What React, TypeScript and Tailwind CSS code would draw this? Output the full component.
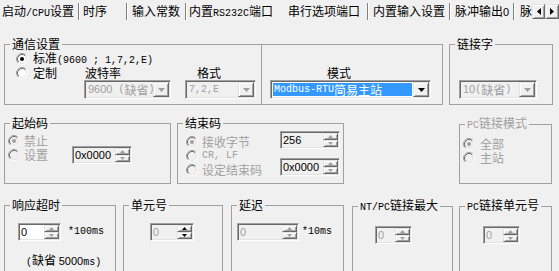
import clsx from 'clsx'
import type { ReactNode } from 'react'

const M = ({ children }: { children: ReactNode }) => (
  <span className="font-['Liberation_Mono',monospace] text-[10px]">{children}</span>
)

const T = ({ children }: { children: ReactNode }) => (
  <span className="font-['Liberation_Sans',sans-serif] text-[11px]">{children}</span>
)

function Radio({ on = false, disabled = false }: { on?: boolean; disabled?: boolean }) {
  return (
    <svg width="12" height="12" viewBox="0 0 12 12" className="shrink-0">
      <circle cx="6" cy="6" r="4" fill={disabled ? '#f0f0f0' : '#fff'} />
      <path d="M2.11 9.89A5.5 5.5 0 0 1 9.89 2.11" fill="none" stroke="#a0a0a0" />
      <path d="M9.89 2.11A5.5 5.5 0 0 1 2.11 9.89" fill="none" stroke="#fff" />
      <path d="M2.82 9.18A4.5 4.5 0 0 1 9.18 2.82" fill="none" stroke="#696969" />
      <path d="M9.18 2.82A4.5 4.5 0 0 1 2.82 9.18" fill="none" stroke="#e3e3e3" />
      {on && <circle cx="6" cy="6" r="2" fill={disabled ? '#a0a0a0' : '#000'} />}
    </svg>
  )
}

function Arrow({ dir, dim }: { dir: 'up' | 'down'; dim?: boolean }) {
  return (
    <svg width="5" height="3" viewBox="0 0 5 3">
      <path d={dir === 'up' ? 'M2.5 0L5 3H0z' : 'M0 0H5L2.5 3z'} fill={dim ? '#a0a0a0' : '#000'} />
    </svg>
  )
}

const raised =
  'border border-t-[#e3e3e3] border-l-[#e3e3e3] border-b-[#696969] border-r-[#696969] bg-[#f0f0f0] shadow-[inset_1px_1px_0_#fff,inset_-1px_-1px_0_#a0a0a0]'
const sunken =
  'border border-t-[#a0a0a0] border-l-[#a0a0a0] border-b-white border-r-white p-[1px] shadow-[inset_1px_1px_0_#696969,inset_-1px_-1px_0_#e3e3e3]'

function Combo({
  className,
  children,
  disabled = false,
  highlight = false,
}: {
  className: string
  children: ReactNode
  disabled?: boolean
  highlight?: boolean
}) {
  return (
    <div className={clsx('flex h-[19px] shrink-0', sunken, disabled ? 'bg-[#f0f0f0]' : 'bg-white', className)}>
      <div
        className={clsx(
          'm-[1px] flex min-w-0 flex-1 items-center whitespace-nowrap pl-[1px] leading-[13px]',
          highlight && 'bg-[#3399ff] text-white',
          disabled && 'text-[#a0a0a0]',
        )}
      >
        {children}
      </div>
      <div className={clsx('flex h-full w-[16px] items-center justify-center', raised)}>
        <svg width="7" height="4" viewBox="0 0 7 4">
          <path d="M0 0H7L3.5 4z" fill={disabled ? '#a0a0a0' : '#000'} />
        </svg>
      </div>
    </div>
  )
}

function Spin({
  className,
  value,
  white = false,
  dimText = false,
  dimArrows = true,
}: {
  className: string
  value: string
  white?: boolean
  dimText?: boolean
  dimArrows?: boolean
}) {
  return (
    <div className={clsx('flex h-[18px] shrink-0', sunken, white ? 'bg-white' : 'bg-[#f0f0f0]', className)}>
      <div
        className={clsx(
          "flex min-w-0 flex-1 items-center pl-[1px] font-['Liberation_Sans',sans-serif] text-[11px]",
          dimText ? 'text-[#a0a0a0]' : 'text-black',
        )}
      >
        {value}
      </div>
      <div className="flex w-[15px] flex-col">
        <div className={clsx('flex h-[7px] items-center justify-center', raised)}>
          <Arrow dir="up" dim={dimArrows} />
        </div>
        <div className={clsx('flex h-[7px] items-center justify-center', raised)}>
          <Arrow dir="down" dim={dimArrows} />
        </div>
      </div>
    </div>
  )
}

function Group({
  title,
  className,
  children,
  muted = false,
}: {
  title: ReactNode
  className: string
  children?: ReactNode
  muted?: boolean
}) {
  return (
    <fieldset className={clsx('shrink-0 border border-[#a0a0a0]', className)}>
      <legend className={clsx('ml-[5px] px-[2px] leading-[14px]', muted && 'text-[#a0a0a0]')}>{title}</legend>
      {children}
    </fieldset>
  )
}

function Sep() {
  return <span className="h-[17px] w-[2px] shrink-0 border-l border-r border-l-[#808080] border-r-white" />
}

function Tab({ className, children }: { className: string; children: ReactNode }) {
  return (
    <span className={clsx('h-[18px] shrink-0 overflow-hidden whitespace-nowrap leading-[18px]', className)}>
      {children}
    </span>
  )
}

function Tabs() {
  return (
    <div className="flex h-[22px] items-center">
      <Tab className="w-[78px] pl-[2px]">
        启动<M>/CPU</M>设置
      </Tab>
      <Sep />
      <Tab className="w-[46px] pl-[3px]">时序</Tab>
      <Sep />
      <Tab className="w-[57px] pl-[4px]">输入常数</Tab>
      <Sep />
      <Tab className="w-[100px] pl-[2px]">
        内置<M>RS232C</M>端口
      </Tab>
      <Tab className="w-[80px] pl-[1px]">串行选项端口</Tab>
      <Sep />
      <Tab className="w-[80px] pl-[4px]">内置输入设置</Tab>
      <Sep />
      <Tab className="w-[62px] pl-[4px]">
        脉冲输出<T>0</T>
      </Tab>
      <Sep />
      <Tab className="w-[17px] pl-[5px]">脉</Tab>
      <div className="flex">
        <div className={clsx('flex h-[15px] w-[13px] items-center justify-center', raised)}>
          <svg width="4" height="7" viewBox="0 0 4 7">
            <path d="M4 0V7L0 3.5z" fill="#000" />
          </svg>
        </div>
        <div className={clsx('flex h-[15px] w-[14px] items-center justify-center', raised)}>
          <svg width="4" height="7" viewBox="0 0 4 7">
            <path d="M0 0V7L4 3.5z" fill="#000" />
          </svg>
        </div>
      </div>
    </div>
  )
}

export default function App() {
  return (
    <div className="h-[271px] w-[559px] overflow-hidden bg-[#f0f0f0] font-['Noto_Sans_CJK_SC','Noto_Sans',sans-serif] text-[12px] leading-[14px] text-black">
      <Tabs />

      {/* 通信设置 / 模式 / 链接字 */}
      <div className="mt-[15px] flex items-start pl-[4px]">
        <Group title="通信设置" className="h-[68px] w-[258px]">
          <div className="pl-[11px] pt-[1px]">
            <div className="flex h-[14px] items-center gap-[5px]">
              <Radio on />
              <span>
                标准<M>(9600 ; 1,7,2,E)</M>
              </span>
            </div>
            <div className="flex h-[14px] items-center">
              <div className="flex w-[68px] items-center gap-[5px]">
                <Radio />
                <span>定制</span>
              </div>
              <span className="w-[101px] pl-[1px]">波特率</span>
              <span className="pl-[12px]">格式</span>
            </div>
            <div className="ml-[68px] flex gap-[14px]">
              <Combo className="w-[87px]" disabled>
                <T>9600</T>
                <M>&nbsp;(</M>缺省<M>)</M>
              </Combo>
              <Combo className="w-[71px]" disabled>
                <M>7,2,E</M>
              </Combo>
            </div>
          </div>
        </Group>
        <div className="mt-[7px] h-[61px] w-[181px] shrink-0 border-b border-r border-t border-[#a0a0a0] pl-[8px] pt-[21px]">
          <div className="h-[14px] pl-[57px]">模式</div>
          <Combo className="w-[161px]" highlight>
            <M>Modbus-RTU</M>简易主站
          </Combo>
        </div>
        <Group title="链接字" className="ml-[6px] h-[68px] w-[104px]">
          <div className="pl-[9px] pt-[29px]">
            <Combo className="w-[78px]" disabled>
              <T>10</T>
              <M>(</M>缺省<M>)</M>
            </Combo>
          </div>
        </Group>
      </div>

      {/* 起始码 / 结束码 / PC链接模式 */}
      <div className="mt-[11px] flex items-start pl-[4px]">
        <Group title="起始码" className="h-[68px] w-[167px]">
          <div className="pl-[3px] pt-[4px] text-[#a0a0a0]">
            <div className="flex h-[14px] items-center gap-[4px]">
              <Radio on disabled />
              <span>禁止</span>
            </div>
            <div className="-mt-[2px] flex h-[18px] items-center">
              <div className="flex w-[64px] items-center gap-[4px]">
                <Radio disabled />
                <span>设置</span>
              </div>
              <Spin className="w-[60px]" value="0x0000" />
            </div>
          </div>
        </Group>
        <Group title="结束码" className="ml-[6px] h-[68px] w-[167px]">
          <div className="flex pl-[8px]">
            <div className="flex w-[94px] flex-col pt-[5px] text-[#a0a0a0]">
              <div className="flex h-[14px] items-center gap-[4px]">
                <Radio on disabled />
                <span>接收字节</span>
              </div>
              <div className="flex h-[14px] items-center gap-[4px]">
                <Radio disabled />
                <M>CR, LF</M>
              </div>
              <div className="flex h-[14px] items-center gap-[4px]">
                <Radio disabled />
                <span>设定结束码</span>
              </div>
            </div>
            <div className="flex flex-col gap-[9px] pt-[1px]">
              <Spin className="w-[60px]" value="256" />
              <Spin className="w-[60px]" value="0x0000" />
            </div>
          </div>
        </Group>
        <Group
          title={
            <>
              <M>PC</M>链接模式
            </>
          }
          muted
          className="ml-[115px] h-[68px] w-[93px]"
        >
          <div className="pl-[3px] pt-[4px] text-[#a0a0a0]">
            <div className="flex h-[14px] items-center gap-[5px]">
              <Radio on disabled />
              <span>全部</span>
            </div>
            <div className="flex h-[14px] items-center gap-[5px]">
              <Radio disabled />
              <span>主站</span>
            </div>
          </div>
        </Group>
      </div>

      {/* 响应超时 / 单元号 / 延迟 / NT/PC链接最大 / PC链接单元号 */}
      <div className="mt-[14px] flex items-start pl-[4px]">
        <Group title="响应超时" className="h-[80px] w-[112px]">
          <div className="pl-[13px] pt-[11px]">
            <div className="flex items-center gap-[7px]">
              <Spin className="w-[43px]" value="0" white />
              <M>*100ms</M>
            </div>
            <div className="mt-[12px] pl-[8px]">
              <M>(</M>缺省 <T>5000</T>
              <M>ms)</M>
            </div>
          </div>
        </Group>
        <Group title="单元号" className="ml-[7px] h-[80px] w-[100px]">
          <div className="pl-[26px] pt-[11px]">
            <Spin className="w-[44px]" value="0" dimText dimArrows={false} />
          </div>
        </Group>
        <Group title="延迟" className="ml-[8px] h-[80px] w-[113px]">
          <div className="flex items-center gap-[3px] pl-[5px] pt-[11px]">
            <Spin className="w-[62px]" value="0" dimText />
            <M>*10ms</M>
          </div>
        </Group>
        <Group
          title={
            <>
              <M>NT/PC</M>链接最大
            </>
          }
          className="ml-[8px] h-[80px] w-[101px]"
        >
          <div className="pl-[22px] pt-[11px]">
            <Spin className="w-[37px]" value="0" dimText />
          </div>
        </Group>
        <Group
          title={
            <>
              <M>PC</M>链接单元号
            </>
          }
          className="ml-[6px] h-[80px] w-[93px]"
        >
          <div className="pl-[23px] pt-[11px]">
            <Spin className="w-[37px]" value="0" dimText />
          </div>
        </Group>
      </div>
    </div>
  )
}
